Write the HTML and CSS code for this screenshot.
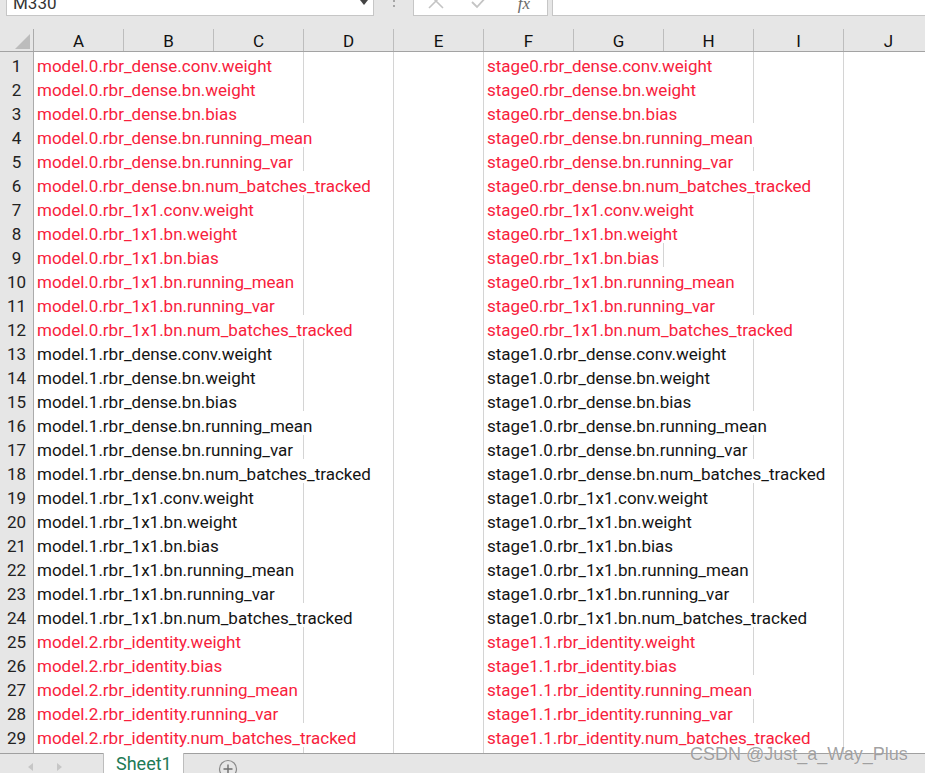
FILE: index.html
```html
<!DOCTYPE html>
<html>
<head>
<meta charset="utf-8">
<link rel="stylesheet" href="styles.css">
</head>
<body>
<div class="app">
  <div class="toolbar">
    <div class="namebox"><span class="nametext">M330</span><span class="ddarrow"></span></div>
    <div class="grip"><span class="dot"></span><span class="dot"></span><span class="dot"></span></div>
    <div class="fxbox">
      <span class="fxslot">
        <svg width="16" height="16" viewBox="0 0 16 16"><path d="M1 1 L15 15 M15 1 L1 15" stroke="#c4c4c4" stroke-width="1.6" fill="none"/></svg>
      </span>
      <span class="fxslot">
        <svg width="18" height="16" viewBox="0 0 18 16"><path d="M1 9 L6 14 L17 2" stroke="#c4c4c4" stroke-width="1.8" fill="none"/></svg>
      </span>
      <span class="fxslot fxtext">fx</span>
    </div>
    <div class="formula"></div>
  </div>

  <div class="sheet">
    <div class="hrow">
      <div class="corner"><svg width="34" height="22" viewBox="0 0 34 22"><polygon points="15,20 30,20 30,5" fill="#bcbcbc"/></svg></div>
      <div class="ch">A</div><div class="ch">B</div><div class="ch">C</div><div class="ch">D</div><div class="ch">E</div>
      <div class="ch">F</div><div class="ch">G</div><div class="ch">H</div><div class="ch">I</div><div class="ch">J</div>
    </div>

    <div class="row first red"><div class="rh">1</div><div class="c s3">model.0.rbr_dense.conv.weight</div><div class="c"></div><div class="c"></div><div class="c s3">stage0.rbr_dense.conv.weight</div><div class="c"></div><div class="c"></div></div>
    <div class="row red"><div class="rh">2</div><div class="c s3">model.0.rbr_dense.bn.weight</div><div class="c"></div><div class="c"></div><div class="c s3">stage0.rbr_dense.bn.weight</div><div class="c"></div><div class="c"></div></div>
    <div class="row red"><div class="rh">3</div><div class="c s3">model.0.rbr_dense.bn.bias</div><div class="c"></div><div class="c"></div><div class="c s3">stage0.rbr_dense.bn.bias</div><div class="c"></div><div class="c"></div></div>
    <div class="row red"><div class="rh">4</div><div class="c s4">model.0.rbr_dense.bn.running_mean</div><div class="c"></div><div class="c s4">stage0.rbr_dense.bn.running_mean</div><div class="c"></div></div>
    <div class="row red"><div class="rh">5</div><div class="c s3">model.0.rbr_dense.bn.running_var</div><div class="c"></div><div class="c"></div><div class="c s3">stage0.rbr_dense.bn.running_var</div><div class="c"></div><div class="c"></div></div>
    <div class="row red"><div class="rh">6</div><div class="c s4">model.0.rbr_dense.bn.num_batches_tracked</div><div class="c"></div><div class="c s4">stage0.rbr_dense.bn.num_batches_tracked</div><div class="c"></div></div>
    <div class="row red"><div class="rh">7</div><div class="c s3">model.0.rbr_1x1.conv.weight</div><div class="c"></div><div class="c"></div><div class="c s3">stage0.rbr_1x1.conv.weight</div><div class="c"></div><div class="c"></div></div>
    <div class="row red"><div class="rh">8</div><div class="c s3">model.0.rbr_1x1.bn.weight</div><div class="c"></div><div class="c"></div><div class="c s3">stage0.rbr_1x1.bn.weight</div><div class="c"></div><div class="c"></div></div>
    <div class="row red"><div class="rh">9</div><div class="c s3">model.0.rbr_1x1.bn.bias</div><div class="c"></div><div class="c"></div><div class="c s2">stage0.rbr_1x1.bn.bias</div><div class="c"></div><div class="c"></div><div class="c"></div></div>
    <div class="row red"><div class="rh">10</div><div class="c s3">model.0.rbr_1x1.bn.running_mean</div><div class="c"></div><div class="c"></div><div class="c s3">stage0.rbr_1x1.bn.running_mean</div><div class="c"></div><div class="c"></div></div>
    <div class="row red"><div class="rh">11</div><div class="c s3">model.0.rbr_1x1.bn.running_var</div><div class="c"></div><div class="c"></div><div class="c s3">stage0.rbr_1x1.bn.running_var</div><div class="c"></div><div class="c"></div></div>
    <div class="row red"><div class="rh">12</div><div class="c s4">model.0.rbr_1x1.bn.num_batches_tracked</div><div class="c"></div><div class="c s4">stage0.rbr_1x1.bn.num_batches_tracked</div><div class="c"></div></div>
    <div class="row"><div class="rh">13</div><div class="c s3">model.1.rbr_dense.conv.weight</div><div class="c"></div><div class="c"></div><div class="c s3">stage1.0.rbr_dense.conv.weight</div><div class="c"></div><div class="c"></div></div>
    <div class="row"><div class="rh">14</div><div class="c s3">model.1.rbr_dense.bn.weight</div><div class="c"></div><div class="c"></div><div class="c s3">stage1.0.rbr_dense.bn.weight</div><div class="c"></div><div class="c"></div></div>
    <div class="row"><div class="rh">15</div><div class="c s3">model.1.rbr_dense.bn.bias</div><div class="c"></div><div class="c"></div><div class="c s3">stage1.0.rbr_dense.bn.bias</div><div class="c"></div><div class="c"></div></div>
    <div class="row"><div class="rh">16</div><div class="c s4">model.1.rbr_dense.bn.running_mean</div><div class="c"></div><div class="c s4">stage1.0.rbr_dense.bn.running_mean</div><div class="c"></div></div>
    <div class="row"><div class="rh">17</div><div class="c s3">model.1.rbr_dense.bn.running_var</div><div class="c"></div><div class="c"></div><div class="c s3">stage1.0.rbr_dense.bn.running_var</div><div class="c"></div><div class="c"></div></div>
    <div class="row"><div class="rh">18</div><div class="c s4">model.1.rbr_dense.bn.num_batches_tracked</div><div class="c"></div><div class="c s4">stage1.0.rbr_dense.bn.num_batches_tracked</div><div class="c"></div></div>
    <div class="row"><div class="rh">19</div><div class="c s3">model.1.rbr_1x1.conv.weight</div><div class="c"></div><div class="c"></div><div class="c s3">stage1.0.rbr_1x1.conv.weight</div><div class="c"></div><div class="c"></div></div>
    <div class="row"><div class="rh">20</div><div class="c s3">model.1.rbr_1x1.bn.weight</div><div class="c"></div><div class="c"></div><div class="c s3">stage1.0.rbr_1x1.bn.weight</div><div class="c"></div><div class="c"></div></div>
    <div class="row"><div class="rh">21</div><div class="c s3">model.1.rbr_1x1.bn.bias</div><div class="c"></div><div class="c"></div><div class="c s3">stage1.0.rbr_1x1.bn.bias</div><div class="c"></div><div class="c"></div></div>
    <div class="row"><div class="rh">22</div><div class="c s3">model.1.rbr_1x1.bn.running_mean</div><div class="c"></div><div class="c"></div><div class="c s3">stage1.0.rbr_1x1.bn.running_mean</div><div class="c"></div><div class="c"></div></div>
    <div class="row"><div class="rh">23</div><div class="c s3">model.1.rbr_1x1.bn.running_var</div><div class="c"></div><div class="c"></div><div class="c s3">stage1.0.rbr_1x1.bn.running_var</div><div class="c"></div><div class="c"></div></div>
    <div class="row"><div class="rh">24</div><div class="c s4">model.1.rbr_1x1.bn.num_batches_tracked</div><div class="c"></div><div class="c s4">stage1.0.rbr_1x1.bn.num_batches_tracked</div><div class="c"></div></div>
    <div class="row red"><div class="rh">25</div><div class="c s3">model.2.rbr_identity.weight</div><div class="c"></div><div class="c"></div><div class="c s3">stage1.1.rbr_identity.weight</div><div class="c"></div><div class="c"></div></div>
    <div class="row red"><div class="rh">26</div><div class="c s3">model.2.rbr_identity.bias</div><div class="c"></div><div class="c"></div><div class="c s3">stage1.1.rbr_identity.bias</div><div class="c"></div><div class="c"></div></div>
    <div class="row red"><div class="rh">27</div><div class="c s3">model.2.rbr_identity.running_mean</div><div class="c"></div><div class="c"></div><div class="c s4">stage1.1.rbr_identity.running_mean</div><div class="c"></div></div>
    <div class="row red"><div class="rh">28</div><div class="c s3">model.2.rbr_identity.running_var</div><div class="c"></div><div class="c"></div><div class="c s3">stage1.1.rbr_identity.running_var</div><div class="c"></div><div class="c"></div></div>
    <div class="row red"><div class="rh">29</div><div class="c s4">model.2.rbr_identity.num_batches_tracked</div><div class="c"></div><div class="c s4">stage1.1.rbr_identity.num_batches_tracked</div><div class="c"></div></div>
    <div class="row"><div class="rh"></div><div class="c s3"></div><div class="c"></div><div class="c"></div><div class="c s3"></div><div class="c"></div><div class="c"></div></div>
  </div>

  <div class="tabbar">
    <div class="nav"><span class="arr left"></span><span class="arr right"></span></div>
    <div class="tab">Sheet1</div>
    <div class="addbtn">
      <svg width="20" height="20" viewBox="0 0 20 20"><circle cx="10" cy="10" r="8.5" stroke="#8a8a8a" stroke-width="1.2" fill="none"/><path d="M10 5.5 V14.5 M5.5 10 H14.5" stroke="#6e6e6e" stroke-width="1.4"/></svg>
    </div>
  </div>

  <div class="watermark">CSDN @Just_a_Way_Plus</div>
</div>
</body>
</html>
```

FILE: styles.css
```css
* { box-sizing: border-box; margin: 0; padding: 0; }
html, body { width: 925px; height: 773px; overflow: hidden; }
body { background: #e6e6e6; font-family: Roboto, "Noto Sans CJK SC", sans-serif; }

.app {
  width: 925px; height: 773px; overflow: hidden;
  display: flex; flex-direction: column;
  position: relative; background: #e6e6e6;
}

/* formula bar */
.toolbar { display: flex; height: 30px; margin-top: -14px; flex: none; }
.namebox {
  margin-left: 6px; width: 368px; background: #fff;
  border: 1px solid #c6c6c6;
  display: flex; align-items: center; justify-content: space-between;
  padding: 0 5px 0 6px;
  font-size: 17px; color: #333; line-height: 28px;
}
.nametext { padding-top: 3px; }
.ddarrow {
  width: 0; height: 0;
  border-left: 4px solid transparent; border-right: 4px solid transparent;
  border-top: 5px solid #444; margin-top: 3px;
}
.grip { width: 39px; display: flex; flex-direction: column; align-items: center; justify-content: center; gap: 3px; }
.dot { width: 2px; height: 2px; background: #a6a6a6; }
.fxbox {
  width: 135px; background: #fff; border: 1px solid #c6c6c6;
  display: flex; align-items: center;
}
.fxslot { width: 44px; display: flex; justify-content: center; align-items: center; }
.fxslot svg { display: block; }
.fxtext {
  font-family: "Liberation Serif", serif; font-style: italic;
  font-size: 17px; color: #6a6a6a; line-height: 28px; padding-top: 5px;
}
.formula { margin-left: 4px; flex: 1; background: #fff; border: 1px solid #c6c6c6; border-right: none; }

/* sheet */
.sheet { margin-top: 13px; height: 724px; overflow: hidden; flex: none; background: #fff; }
.hrow, .row {
  display: grid;
  grid-template-columns: 34px repeat(10, 90px);
  width: 934px;
}
.hrow { height: 23px; background: #e6e6e6; border-bottom: 1px solid #a3a3a3; }
.corner { border-right: 1px solid #ababab; }
.corner svg { display: block; }
.ch {
  border-right: 1px solid #bdbdbd;
  text-align: center; font-size: 17px; color: #111;
  line-height: 19px; padding-top: 3px;
}

.row { height: 24px; font-size: 17px; color: #141414; }
.row.first { height: 23px; }
.row.red { color: #f8213c; }
.rh {
  background: #e6e6e6; border-right: 1px solid #ababab; border-bottom: 1px solid #cdcdcd;
  text-align: center; color: #222; line-height: 18px; padding-top: 6px;
}
.row.first .rh, .row.first .c { padding-top: 5px; }
.c {
  background: #fff;
  border-right: 1px solid #d4d4d4; border-bottom: 1px solid #d4d4d4;
  padding-left: 3px; padding-top: 6px; line-height: 18px;
  white-space: nowrap; overflow: visible;
}
.s2 { grid-column: span 2; }
.s3 { grid-column: span 3; }
.s4 { grid-column: span 4; }

/* sheet tabs */
.tabbar {
  height: 20px; flex: none; display: flex;
  border-top: 1px solid #a0a0a0; background: #e6e6e6;
}
.nav { width: 103px; display: flex; align-items: center; padding-left: 28px; gap: 24px; padding-top: 6px; }
.arr { width: 0; height: 0; border-top: 4.5px solid transparent; border-bottom: 4.5px solid transparent; }
.arr.left { border-right: 5px solid #c6c6c6; }
.arr.right { border-left: 5px solid #c6c6c6; }
.tab {
  width: 81px; height: 21px; margin-top: -1px;
  background: #fff; border-left: 1px solid #bdbdbd; border-right: 1px solid #bdbdbd;
  color: #217a55; font-size: 18px; line-height: 20px; padding-left: 12px; padding-top: 1px;
}
.addbtn { margin-left: 34px; padding-top: 5px; }
.addbtn svg { display: block; }

/* watermark overlay */
.watermark {
  position: absolute; left: 690px; top: 745px;
  font-family: "Liberation Sans", Arial, sans-serif; font-size: 18px; line-height: 18px;
  color: rgba(120, 120, 120, 0.7);
  text-shadow: 0 0 1px rgba(255, 255, 255, 0.9);
  white-space: nowrap;
}
```
